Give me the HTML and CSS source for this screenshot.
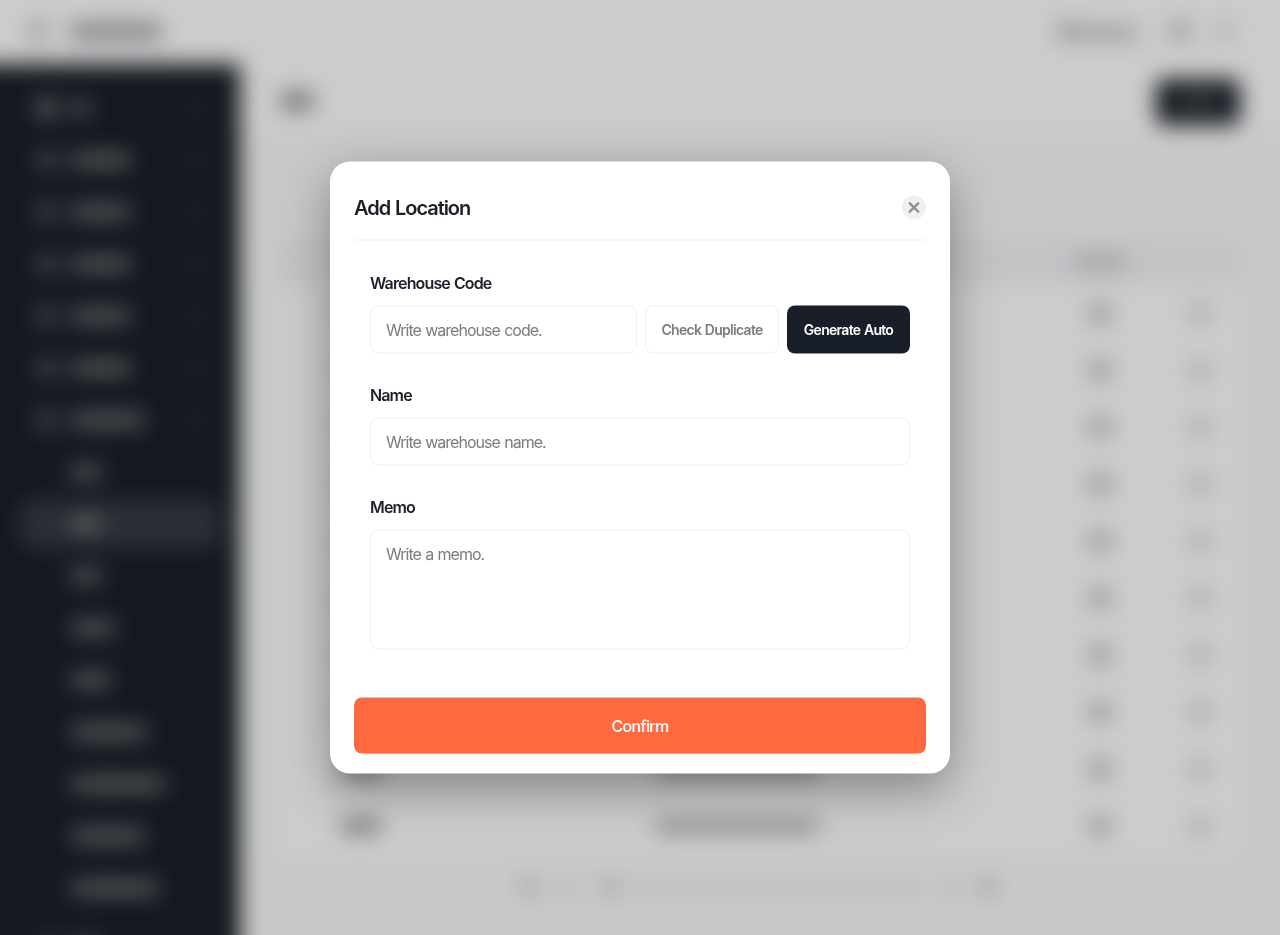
FILE: index.html
```
<!DOCTYPE html>
<html lang="en">
<head>
    <meta charset="UTF-8">
    <meta name="viewport" content="width=device-width, initial-scale=1.0">
    <title>Add Location</title>
    <link rel="stylesheet" href="styles.css">
</head>
<body>
    <div class="app" aria-hidden="true">
        <header class="topbar">
            <i class="bar logo"></i>
            <i class="bar brand"></i>
            <div class="topbar-right">
                <i class="bar flag"></i>
                <i class="bar user"></i>
                <i class="bar tool"></i>
                <i class="bar tool light"></i>
            </div>
        </header>
        <div class="layout">
            <nav class="sidebar" id="sidebar"></nav>
            <main class="content">
                <div class="page-head">
                    <i class="bar page-title"></i>
                    <div class="add-btn"><i class="bar"></i></div>
                </div>
                <div class="page-body">
                    <div class="table" id="table">
                        <div class="row head"><span></span><span></span><span><i class="bar"></i></span><span></span></div>
                    </div>
                    <div class="pagination" id="pagination"></div>
                </div>
            </main>
        </div>
    </div>

    <div class="overlay">
        <div class="modal" role="dialog" aria-labelledby="modalTitle">
            <div class="modal-header">
                <h1 id="modalTitle">Add Location</h1>
                <button type="button" class="close" aria-label="Close">
                    <svg width="12" height="12" viewBox="0 0 12 12">
                        <path d="M1.8 1.8l8.4 8.4M10.2 1.8l-8.4 8.4" fill="none" stroke="#919294" stroke-width="2.5" stroke-linecap="round"/>
                    </svg>
                </button>
            </div>
            <form class="modal-form">
                <div class="form-group">
                    <label for="code">Warehouse Code</label>
                    <div class="code-row">
                        <input type="text" id="code" placeholder="Write warehouse code.">
                        <button type="button" class="btn btn-check">Check Duplicate</button>
                        <button type="button" class="btn btn-auto">Generate Auto</button>
                    </div>
                </div>
                <div class="form-group">
                    <label for="name">Name</label>
                    <input type="text" id="name" placeholder="Write warehouse name.">
                </div>
                <div class="form-group">
                    <label for="memo">Memo</label>
                    <textarea id="memo" placeholder="Write a memo."></textarea>
                </div>
            </form>
            <button type="button" class="confirm">Confirm</button>
        </div>
    </div>

    <script>
        // Menu: width of each label, sub items have no icon
        const menu = [
            { w: 20 }, { w: 60 }, { w: 60 }, { w: 60 }, { w: 60 }, { w: 60 }, { w: 74 },
            { w: 30, sub: true }, { w: 30, sub: true, active: true }, { w: 30, sub: true },
            { w: 44, sub: true }, { w: 40, sub: true }, { w: 76, sub: true }, { w: 94, sub: true },
            { w: 74, sub: true }, { w: 88, sub: true }, { w: 32 }
        ];
        document.getElementById('sidebar').innerHTML = menu.map(item => `
            <div class="nav-item${item.sub ? ' sub' : ''}${item.active ? ' active' : ''}">
                <i class="bar nav-icon"></i>
                <i class="bar nav-label" style="width: ${item.w}px"></i>
                <i class="bar nav-arrow"></i>
            </div>`).join('');

        const row = '<div class="row"><span><i class="bar"></i></span><span><i class="bar"></i></span><span><i class="bar"></i></span><span><i class="bar"></i></span></div>';
        document.getElementById('table').innerHTML += row.repeat(10);

        // first/prev, ten pages, next/last
        const pagination = document.getElementById('pagination');
        [2, 10, 2].forEach((count, i) => {
            const group = document.createElement('div');
            group.className = i === 1 ? 'pages' : 'arrows';
            group.innerHTML = '<i class="bar"></i>'.repeat(count);
            pagination.appendChild(group);
        });
    </script>
</body>
</html>
```
FILE: styles.css
```
* {
    box-sizing: border-box;
    margin: 0;
    padding: 0;
    font-family: Inter, 'Liberation Sans', sans-serif;
}

body {
    height: 100vh;
    overflow: hidden;
    background-color: #fafbfa;
}

/* Page behind the modal, 40px larger on each side so the blur has no soft edge */
.app {
    position: fixed;
    inset: -40px;
    overflow: hidden;
    background-color: #fafbfa;
    filter: blur(11px);
}

.bar {
    display: block;
    flex-shrink: 0;
    height: 14px;
    border-radius: 5px;
    background-color: #9b9c9e;
}

.topbar {
    display: flex;
    align-items: center;
    height: 104px;
    padding: 40px 86px 2px 68px;
    background-color: #fff;
}

.logo {
    width: 20px;
    height: 20px;
    background-color: #c6c7c9;
}

.brand {
    width: 92px;
    height: 17px;
    margin-left: 22px;
    background-color: #a0a1a3;
}

.topbar-right {
    display: flex;
    align-items: center;
    margin-left: auto;
}

.flag {
    width: 18px;
    height: 18px;
    background-color: #b8b9bb;
}

.user {
    width: 62px;
    margin: 3px 32px 0 0;
    background-color: #c2c3c5;
}

.tool {
    width: 20px;
    height: 20px;
    background-color: #c3c4c6;
}

.tool.light {
    margin-left: 24px;
    background-color: #e3e4e8;
}

.layout {
    display: flex;
    height: 911px;
}

.sidebar {
    display: flex;
    flex-direction: column;
    gap: 4px;
    width: 280px;
    padding: 20px 20px 0 60px;
    background-color: #191f28;
    overflow: hidden;
}

.nav-item {
    display: flex;
    flex-shrink: 0;
    align-items: center;
    height: 48px;
    padding: 0 18px 0 16px;
    border-radius: 12px;
}

.nav-item .bar {
    background-color: #767779;
}

.nav-item .nav-icon {
    width: 22px;
    height: 20px;
    margin-right: 13px;
    background-color: #505256;
}

.nav-item .nav-arrow {
    width: 12px;
    height: 12px;
    margin-left: auto;
    background-color: #363b42;
}

.nav-item:first-child .nav-icon {
    background-color: #707174;
}

.nav-item:last-child {
    padding-top: 6px;
    opacity: 0.5;
}

.nav-item.sub .nav-icon,
.nav-item.sub .nav-arrow {
    visibility: hidden;
}

.nav-item.active {
    background-color: #363b43;
}

.nav-item.active .bar {
    background-color: #808182;
}

.content {
    flex: 1;
}

.page-head {
    display: flex;
    align-items: center;
    justify-content: space-between;
    height: 69px;
    padding: 6px 80px 0 40px;
    background-color: #fff;
}

.page-title {
    width: 34px;
    height: 18px;
    margin-bottom: 2px;
    background-color: #8f9093;
}

.add-btn {
    display: flex;
    align-items: center;
    justify-content: center;
    width: 84px;
    height: 46px;
    border-radius: 8px;
    background-color: #191f28;
}

.add-btn .bar {
    width: 44px;
    background-color: #4e5054;
}

.page-body {
    padding: 107px 80px 0 36px;
}

.table {
    background-color: #fff;
}

.row {
    display: grid;
    grid-template-columns: 170px 582px 144px 56px;
    height: 57px;
}

.row.head {
    height: 44px;
    background-color: #f3f4f7;
}

.row span {
    display: flex;
    align-items: center;
    justify-content: center;
}

.row span:nth-child(1) .bar {
    width: 40px;
    height: 16px;
}

.row span:nth-child(2) .bar {
    width: 164px;
    height: 16px;
    background-color: #b6b7b9;
}

.row span:nth-child(3) .bar {
    width: 20px;
    height: 18px;
    background-color: #b4b5b7;
}

.row span:nth-child(4) .bar {
    width: 16px;
    height: 18px;
    background-color: #c9cacb;
}

.row.head span:nth-child(3) .bar {
    width: 52px;
    height: 14px;
    background-color: #c7c8cb;
}

.pagination {
    display: flex;
    justify-content: center;
    gap: 25px;
    padding-top: 23px;
}

.arrows,
.pages {
    display: flex;
    gap: 15px;
}

.arrows {
    gap: 20px;
}

.pagination .bar {
    width: 18px;
    height: 20px;
    background-color: #e8e9ed;
}

.arrows:first-child .bar:first-child,
.arrows:last-child .bar:last-child,
.pages .bar:first-child {
    background-color: #d3d4d4;
}

/* Modal */
.overlay {
    position: fixed;
    inset: 0;
    display: flex;
    align-items: center;
    justify-content: center;
    background-color: rgba(0, 0, 0, 0.2);
}

.modal {
    width: 620px;
    height: 612px;
    padding: 24px 24px 20px;
    border-radius: 20px;
    background-color: #fff;
    box-shadow: 0 16px 48px rgba(0, 0, 0, 0.34);
    transform: translateY(-0.5px);
}

.modal-header {
    display: flex;
    align-items: center;
    justify-content: space-between;
    height: 55px;
    padding-bottom: 10px;
    border-bottom: 1px solid #f1f1f1;
}

h1 {
    color: #1b2029;
    font-size: 20px;
    font-weight: 600;
    letter-spacing: -1.05px;
    word-spacing: 1px;
}

.close {
    display: flex;
    align-items: center;
    justify-content: center;
    width: 24px;
    height: 24px;
    border: none;
    border-radius: 50%;
    background-color: #eff0f2;
    cursor: pointer;
}

.modal-form {
    display: flex;
    flex-direction: column;
    gap: 29px;
    padding: 30px 16px 48px;
}

label {
    display: block;
    margin-bottom: 11px;
    color: #1b2029;
    font-size: 16px;
    font-weight: 600;
    line-height: 24px;
    letter-spacing: -0.86px;
    word-spacing: 0.8px;
}

input,
textarea {
    display: block;
    width: 100%;
    height: 48px;
    padding: 0 15px;
    border: 1px solid #eee;
    border-radius: 8px;
    background-color: #fff;
    font-size: 16px;
    letter-spacing: -0.98px;
    word-spacing: 0.8px;
    outline: none;
}

textarea {
    height: 120px;
    padding: 11px 15px;
    line-height: 24px;
    resize: none;
}

input::placeholder,
textarea::placeholder {
    color: #7b7c80;
}

.code-row {
    display: flex;
    gap: 8px;
}

.code-row input {
    flex: 1;
    min-width: 0;
}

.btn {
    height: 48px;
    border-radius: 8px;
    font-size: 14px;
    font-weight: 600;
    letter-spacing: -0.7px;
    word-spacing: 0.7px;
    white-space: nowrap;
    cursor: pointer;
}

.btn-check {
    width: 134px;
    border: 1px solid #eee;
    background-color: #fff;
    color: #7b7c80;
}

.btn-auto {
    width: 123px;
    border: none;
    background-color: #191f28;
    color: #fff;
}

.confirm {
    width: 100%;
    height: 56px;
    border: none;
    border-radius: 8px;
    background-color: #ff693d;
    color: #fff;
    font-size: 16px;
    font-weight: 500;
    letter-spacing: -0.7px;
    cursor: pointer;
}
```
